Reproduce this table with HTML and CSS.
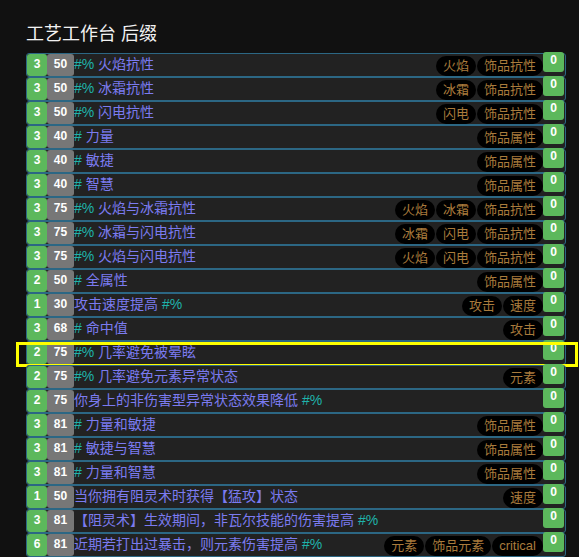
FILE: index.html
```
<!DOCTYPE html>
<html>
<head>
   <meta charset="utf-8">
   <meta name="viewport" content="width=device-width, initial-scale=1">
   <title>工艺工作台 后缀</title>
   <link rel="stylesheet" href="styles.css">
</head>
<body>
   <div class="bench">
      <h2 class="head">工艺工作台 后缀</h2>
      <div class="list">
         <div class="row"><span class="lv">3</span><span class="ilvl">50</span><span class="txt"><span class="ph">#%</span> 火焰抗性</span><span class="tag">火焰</span><span class="tag">饰品抗性</span><span class="zero">0</span></div>
         <div class="row"><span class="lv">3</span><span class="ilvl">50</span><span class="txt"><span class="ph">#%</span> 冰霜抗性</span><span class="tag">冰霜</span><span class="tag">饰品抗性</span><span class="zero">0</span></div>
         <div class="row"><span class="lv">3</span><span class="ilvl">50</span><span class="txt"><span class="ph">#%</span> 闪电抗性</span><span class="tag">闪电</span><span class="tag">饰品抗性</span><span class="zero">0</span></div>
         <div class="row"><span class="lv">3</span><span class="ilvl">40</span><span class="txt"><span class="ph">#</span> 力量</span><span class="tag">饰品属性</span><span class="zero">0</span></div>
         <div class="row"><span class="lv">3</span><span class="ilvl">40</span><span class="txt"><span class="ph">#</span> 敏捷</span><span class="tag">饰品属性</span><span class="zero">0</span></div>
         <div class="row"><span class="lv">3</span><span class="ilvl">40</span><span class="txt"><span class="ph">#</span> 智慧</span><span class="tag">饰品属性</span><span class="zero">0</span></div>
         <div class="row"><span class="lv">3</span><span class="ilvl">75</span><span class="txt"><span class="ph">#%</span> 火焰与冰霜抗性</span><span class="tag">火焰</span><span class="tag">冰霜</span><span class="tag">饰品抗性</span><span class="zero">0</span></div>
         <div class="row"><span class="lv">3</span><span class="ilvl">75</span><span class="txt"><span class="ph">#%</span> 冰霜与闪电抗性</span><span class="tag">冰霜</span><span class="tag">闪电</span><span class="tag">饰品抗性</span><span class="zero">0</span></div>
         <div class="row"><span class="lv">3</span><span class="ilvl">75</span><span class="txt"><span class="ph">#%</span> 火焰与闪电抗性</span><span class="tag">火焰</span><span class="tag">闪电</span><span class="tag">饰品抗性</span><span class="zero">0</span></div>
         <div class="row"><span class="lv">2</span><span class="ilvl">50</span><span class="txt"><span class="ph">#</span> 全属性</span><span class="tag">饰品属性</span><span class="zero">0</span></div>
         <div class="row"><span class="lv">1</span><span class="ilvl">30</span><span class="txt">攻击速度提高 <span class="ph">#%</span></span><span class="tag">攻击</span><span class="tag">速度</span><span class="zero">0</span></div>
         <div class="row"><span class="lv">3</span><span class="ilvl">68</span><span class="txt"><span class="ph">#</span> 命中值</span><span class="tag">攻击</span><span class="zero">0</span></div>
         <div class="row picked"><span class="lv">2</span><span class="ilvl">75</span><span class="txt"><span class="ph">#%</span> 几率避免被晕眩</span><span class="zero">0</span></div>
         <div class="row"><span class="lv">2</span><span class="ilvl">75</span><span class="txt"><span class="ph">#%</span> 几率避免元素异常状态</span><span class="tag">元素</span><span class="zero">0</span></div>
         <div class="row"><span class="lv">2</span><span class="ilvl">75</span><span class="txt">你身上的非伤害型异常状态效果降低 <span class="ph">#%</span></span><span class="zero">0</span></div>
         <div class="row"><span class="lv">3</span><span class="ilvl">81</span><span class="txt"><span class="ph">#</span> 力量和敏捷</span><span class="tag">饰品属性</span><span class="zero">0</span></div>
         <div class="row"><span class="lv">3</span><span class="ilvl">81</span><span class="txt"><span class="ph">#</span> 敏捷与智慧</span><span class="tag">饰品属性</span><span class="zero">0</span></div>
         <div class="row"><span class="lv">3</span><span class="ilvl">81</span><span class="txt"><span class="ph">#</span> 力量和智慧</span><span class="tag">饰品属性</span><span class="zero">0</span></div>
         <div class="row"><span class="lv">1</span><span class="ilvl">50</span><span class="txt">当你拥有阻灵术时获得【猛攻】状态</span><span class="tag">速度</span><span class="zero">0</span></div>
         <div class="row"><span class="lv">3</span><span class="ilvl">81</span><span class="txt">【阻灵术】生效期间，非瓦尔技能的伤害提高 <span class="ph">#%</span></span><span class="zero">0</span></div>
         <div class="row"><span class="lv">6</span><span class="ilvl">81</span><span class="txt">近期若打出过暴击，则元素伤害提高 <span class="ph">#%</span></span><span class="tag">元素</span><span class="tag">饰品元素</span><span class="tag">critical</span><span class="zero">0</span></div>
      </div>
   </div>
</body>
</html>
```
FILE: styles.css
```
body{
   margin: 0;
   background-color: #111111;
   font-family: "Liberation Sans", "Noto Sans CJK SC", sans-serif;
}

.bench{
   width: 540px;
   padding: 22px 0 0 26px;
}

h2.head{
   margin: 0 0 7px 0;
   font-size: 18px;
   line-height: 24px;
   font-weight: normal;
   color: #f2f2f2;
}

.row{
   position: relative;
   display: flex;
   height: 22px;
   border: 1px solid #2c6784;
   border-radius: 3px;
   background-color: #222222;
}

.lv, .ilvl{
   color: white;
   font-weight: bold;
   font-size: 12px;
   line-height: 20px;
   text-align: center;
   border-radius: 3px;
}
.lv{
   width: 20px;
   background-color: #5cb85c;
}
.ilvl{
   width: 27px;
   background-color: #777777;
}

.txt{
   flex: 1;
   min-width: 0;
   color: #7b7bf0;
   font-size: 14px;
   line-height: 21px;
   white-space: nowrap;
   overflow: hidden;
}
.ph{
   color: #1fb3ab;
}

.tag{
   align-self: flex-end;
   height: 20px;
   line-height: 19px;
   padding: 0 7px;
   margin-left: 1px;
   background-color: #000000;
   border-radius: 10px;
   color: #a97b3c;
   font-size: 13px;
   white-space: nowrap;
}

.zero{
   align-self: flex-start;
   width: 21px;
   height: 20px;
   margin: -2px 1px 0 0;
   background-color: #5cb85c;
   border-radius: 3px;
   color: white;
   font-weight: bold;
   font-size: 12px;
   line-height: 17px;
   text-align: center;
}

/* selected row */
.picked::after{
   content: "";
   position: absolute;
   top: 0;
   bottom: -3px;
   left: -11px;
   right: -13px;
   border: 3px solid #ffff00;
   pointer-events: none;
}
```
